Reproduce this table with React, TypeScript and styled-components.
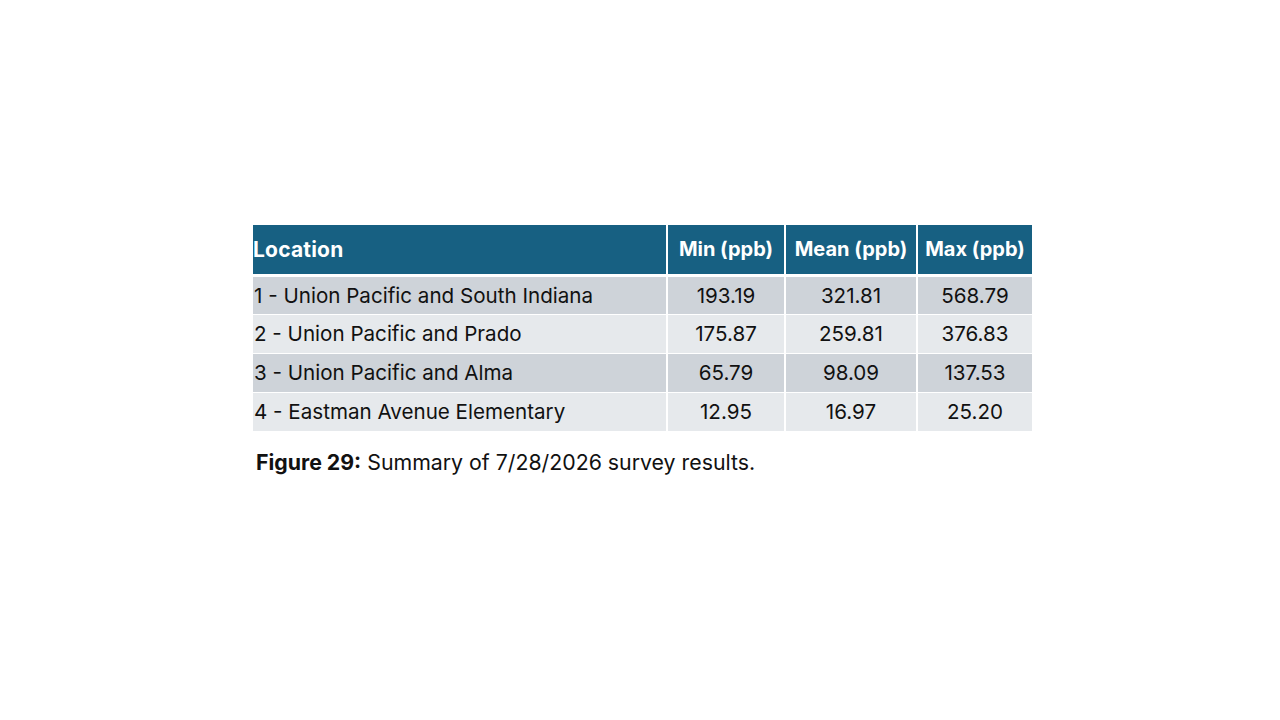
import React from "react";
import styled, { createGlobalStyle } from "styled-components";

const Global = createGlobalStyle`
  html, body { margin: 0; padding: 0; background: #ffffff; }
  body { font-family: "Inter", "Liberation Sans", sans-serif; }
`;

const Slide = styled.div`
  width: 1280px;
  height: 720px;
  box-sizing: border-box;
  padding: 225px 0 0 253px;
  background: #ffffff;
  display: flex;
  flex-direction: column;
`;

const Table = styled.table`
  border-collapse: collapse;
  width: 779px;
  table-layout: fixed;
  font-family: "Inter", "Liberation Sans", sans-serif;
`;

const HeadCell = styled.th<{ $align?: "left" | "center" }>`
  background: #176082;
  color: #ffffff;
  font-weight: 700;
  font-size: ${(p) => (p.$align === "left" ? "21px" : "20px")};
  letter-spacing: ${(p) => (p.$align === "left" ? "0.2px" : "0")};
  height: 50px;
  padding: 0 ${(p) => (p.$align === "left" ? "0" : "2px")};
  text-align: ${(p) => p.$align ?? "center"};
  border-left: 2px solid #ffffff;
  border-bottom: 3px solid #ffffff;
  box-sizing: border-box;
  white-space: nowrap;
  &:first-child { border-left: none; }
`;

const Row = styled.tr<{ $band: boolean }>`
  background: ${(p) => (p.$band ? "#ced3d9" : "#e6e9ec")};
`;

const Cell = styled.td<{ $align?: "left" | "center" }>`
  color: #111111;
  font-size: 20.6px;
  height: 39px;
  padding: 0 ${(p) => (p.$align === "left" ? "0 0 1px" : "4px")};
  text-align: ${(p) => p.$align ?? "center"};
  border-left: 2px solid #ffffff;
  border-top: 1px solid #ffffff;
  box-sizing: border-box;
  white-space: nowrap;
  &:first-child { border-left: none; }
`;

const Caption = styled.p`
  margin: 18px 0 0 3px;
  font-family: "Inter", "Liberation Sans", sans-serif;
  font-size: 21.3px;
  color: #111111;
`;

const Bold = styled.span`
  font-weight: 700;
`;

const rows = [
  ["1 - Union Pacific and South Indiana", "193.19", "321.81", "568.79"],
  ["2 - Union Pacific and Prado", "175.87", "259.81", "376.83"],
  ["3 - Union Pacific and Alma", "65.79", "98.09", "137.53"],
  ["4 - Eastman Avenue Elementary", "12.95", "16.97", "25.20"],
];

export default function App() {
  return (
    <>
      <Global />
      <Slide>
        <Table>
          <colgroup>
            <col style={{ width: 414 }} />
            <col style={{ width: 118 }} />
            <col style={{ width: 132 }} />
            <col style={{ width: 115 }} />
          </colgroup>
          <thead>
            <tr>
              <HeadCell $align="left">Location</HeadCell>
              <HeadCell>Min (ppb)</HeadCell>
              <HeadCell>Mean (ppb)</HeadCell>
              <HeadCell>Max (ppb)</HeadCell>
            </tr>
          </thead>
          <tbody>
            {rows.map((r, i) => (
              <Row key={i} $band={i % 2 === 0}>
                <Cell $align="left">{r[0]}</Cell>
                <Cell>{r[1]}</Cell>
                <Cell>{r[2]}</Cell>
                <Cell>{r[3]}</Cell>
              </Row>
            ))}
          </tbody>
        </Table>
        <Caption>
          <Bold>Figure 29:</Bold> Summary of 7/28/2026 survey results.
        </Caption>
      </Slide>
    </>
  );
}
